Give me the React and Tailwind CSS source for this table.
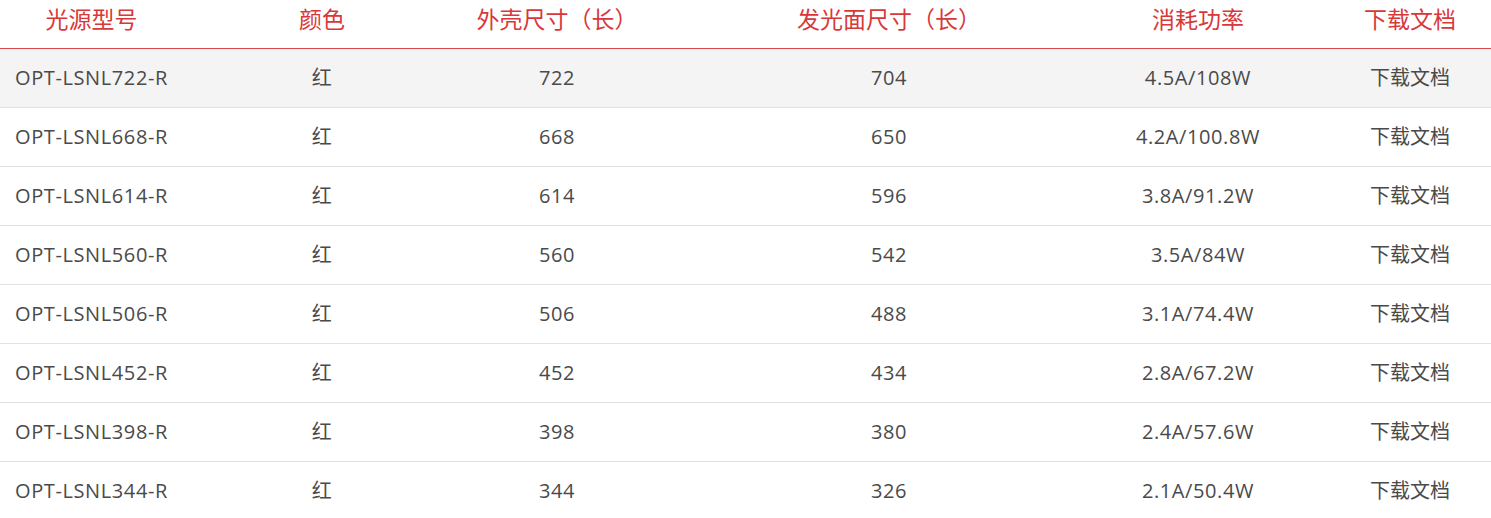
import React from 'react';

const rows = [
  ['OPT-LSNL722-R', '红', '722', '704', '4.5A/108W'],
  ['OPT-LSNL668-R', '红', '668', '650', '4.2A/100.8W'],
  ['OPT-LSNL614-R', '红', '614', '596', '3.8A/91.2W'],
  ['OPT-LSNL560-R', '红', '560', '542', '3.5A/84W'],
  ['OPT-LSNL506-R', '红', '506', '488', '3.1A/74.4W'],
  ['OPT-LSNL452-R', '红', '452', '434', '2.8A/67.2W'],
  ['OPT-LSNL398-R', '红', '398', '380', '2.4A/57.6W'],
  ['OPT-LSNL344-R', '红', '344', '326', '2.1A/50.4W'],
];

const cols = 'grid grid-cols-[183px_278px_192px_472px_146px_220px]';

function App() {
  return (
    <div className="w-[1491px] bg-white" style={{ fontFamily: '"Open Sans", "Noto Sans CJK SC", sans-serif' }}>
      <div className={`${cols} h-[49px] items-center pb-[9px] border-b border-[#d7464a] text-[23px] text-[#d9383a] text-center`}>
        <div>光源型号</div>
        <div>颜色</div>
        <div>外壳尺寸（长）</div>
        <div>发光面尺寸（长）</div>
        <div>消耗功率</div>
        <div className="pl-[58px]">下载文档</div>
      </div>
      {rows.map((r, i) => (
        <div
          key={r[0]}
          className={`${cols} h-[59px] items-center border-b border-[#e2e2e2] text-[20px] tracking-[0.6px] text-[#4a4a4a] text-center ${i === 0 ? 'bg-[#f4f4f4]' : ''}`}
        >
          <div>{r[0]}</div>
          <div>{r[1]}</div>
          <div>{r[2]}</div>
          <div>{r[3]}</div>
          <div>{r[4]}</div>
          <div className="pl-[58px] tracking-normal">下载文档</div>
        </div>
      ))}
    </div>
  );
}

export default App;
